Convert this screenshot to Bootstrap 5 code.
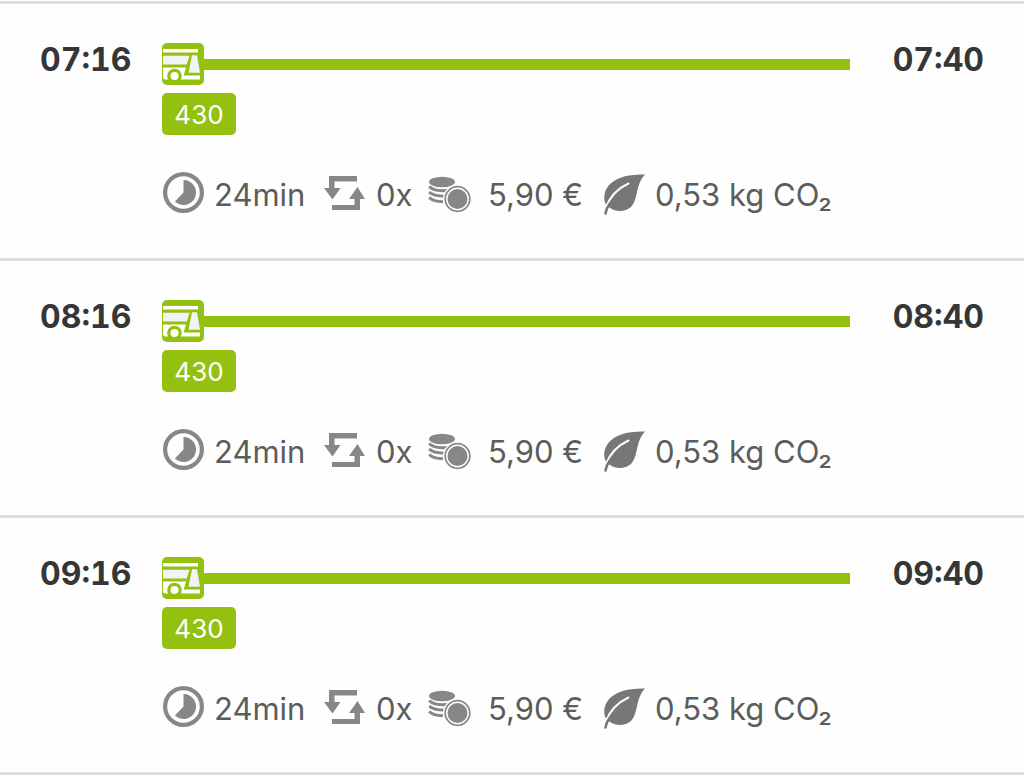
<!DOCTYPE html>
<html lang="de">
<head>
<meta charset="utf-8">
<meta name="viewport" content="width=device-width, initial-scale=1">
<title>Verbindungen</title>
<link href="https://cdn.jsdelivr.net/npm/bootstrap@5.3.0/dist/css/bootstrap.min.css" rel="stylesheet">
<style>
  body { font-family: Inter, "Liberation Sans", sans-serif; background: #fefefe; color: #5c5c5c; }
  .trips { border-top: 3px solid #dedede; margin-top: 1px; }
  .trip { border-bottom: 3px solid #dedede; padding: 39px 40px 41px; }
  .time { font-size: 32px; line-height: 34px; font-weight: 700; color: #363636; font-variant-numeric: tabular-nums; }
  .time-start { width: 122px; }
  .time-end { width: 134px; }
  .bus { width: 42px; height: 42px; }
  .leg { height: 11px; background: #94c010; }
  .line-tag { width: 74px; height: 42px; margin-top: 8px; border-radius: 5px; background: #94c010; color: #fff; font-size: 26px; line-height: 43px; }
  .facts { margin: 36px -60px 0 122px; font-size: 31px; line-height: 46px; }
  .fact span { padding-top: 1px; margin-bottom: -1px; }
  .fact svg { width: 44px; height: 44px; fill: #878787; }
  .fact-time { min-width: 162px; }
  .fact-change { min-width: 104px; }
  .fact-price { min-width: 175px; }
</style>
</head>
<body>
<svg class="d-none" aria-hidden="true">
  <symbol id="i-bus" viewBox="0 0 42 42">
    <rect width="42" height="42" rx="5" fill="#94c010"/>
    <path d="M1 6h35v3.500H1z" fill="#fff"/>
    <path d="M1 12.700h26.500l-2.700 8.800H1z" fill="#f1f3f4"/>
    <path d="M30 12.300h5l3 17.400H26.500z" fill="#f1f3f4"/>
    <path d="M1 24.500h23l-2.300 8H38v4H3a2 2 0 0 1-2-2z" fill="#fff"/>
    <circle cx="12.500" cy="33" r="7.300" fill="#94c010"/>
    <circle cx="12.500" cy="33" r="4" fill="#fff"/>
  </symbol>
  <symbol id="i-clock" viewBox="0 0 44 44">
    <circle cx="21.500" cy="21.500" r="18.400" fill="none" stroke="#878787" stroke-width="4.200"/>
    <path d="M21.500 9a12.500 12.500 0 1 1-8.600 21.500l8.600-9z"/>
  </symbol>
  <symbol id="i-change" viewBox="0 0 44 44">
    <path d="M5 5h28v5.500H10.500V17H16.500L8.500 28.500 0 17h5z"/>
    <path d="M36 39H8v-5h22.500v-6H25l8.500-12L41 28h-5z"/>
  </symbol>
  <symbol id="i-coins" viewBox="0 0 44 44">
    <ellipse cx="14" cy="11" rx="13" ry="5.200"/>
    <g fill="none" stroke="#878787" stroke-width="3">
      <path d="M1.200 15.500Q5 19.500 14 19.800q6 0 9-1.500"/>
      <path d="M1.200 21Q5 25 17 25.200"/>
      <path d="M1.200 26.500Q5 30.500 15 30.700"/>
    </g>
    <circle cx="29.500" cy="28" r="14.500" fill="#fefefe"/>
    <circle cx="29.500" cy="28" r="12.300" fill="none" stroke="#878787" stroke-width="1.700"/>
    <circle cx="29.500" cy="28" r="10"/>
  </symbol>
  <symbol id="i-leaf" viewBox="0 0 44 44">
    <path d="M42 3.500C32 3.500 20 4 11 10 2 16 0 24 2 32L7 37C13 41 22 41 28 36 36 27 32 14 42 3.500z" fill="#777"/>
    <path d="M25.500 12.500Q9 20 2.500 37" fill="none" stroke="#fefefe" stroke-width="2" stroke-linecap="round"/>
    <path d="M6.500 33Q3.500 37 2.500 42.500" fill="none" stroke="#777" stroke-width="2.600" stroke-linecap="round"/>
  </symbol>
</svg>

<main class="trips">
  <article class="trip">
    <div class="d-flex">
      <time class="time time-start flex-shrink-0">07:16</time>
      <div class="flex-grow-1">
        <div class="d-flex align-items-center"><svg class="bus flex-shrink-0" role="img" aria-label="Bus"><use href="#i-bus"/></svg><div class="leg flex-grow-1"></div></div>
        <div class="line-tag text-center">430</div>
      </div>
      <time class="time time-end flex-shrink-0 text-end">07:40</time>
    </div>
    <div class="facts d-flex flex-wrap">
      <div class="fact fact-time d-flex gap-2"><svg aria-hidden="true"><use href="#i-clock"/></svg><span>24min</span></div>
      <div class="fact fact-change d-flex gap-2"><svg aria-hidden="true"><use href="#i-change"/></svg><span>0x</span></div>
      <div class="fact fact-price d-flex gap-3"><svg aria-hidden="true"><use href="#i-coins"/></svg><span>5,90 €</span></div>
      <div class="fact d-flex gap-2"><svg aria-hidden="true"><use href="#i-leaf"/></svg><span>0,53 kg CO₂</span></div>
    </div>
  </article>
  <article class="trip">
    <div class="d-flex">
      <time class="time time-start flex-shrink-0">08:16</time>
      <div class="flex-grow-1">
        <div class="d-flex align-items-center"><svg class="bus flex-shrink-0" role="img" aria-label="Bus"><use href="#i-bus"/></svg><div class="leg flex-grow-1"></div></div>
        <div class="line-tag text-center">430</div>
      </div>
      <time class="time time-end flex-shrink-0 text-end">08:40</time>
    </div>
    <div class="facts d-flex flex-wrap">
      <div class="fact fact-time d-flex gap-2"><svg aria-hidden="true"><use href="#i-clock"/></svg><span>24min</span></div>
      <div class="fact fact-change d-flex gap-2"><svg aria-hidden="true"><use href="#i-change"/></svg><span>0x</span></div>
      <div class="fact fact-price d-flex gap-3"><svg aria-hidden="true"><use href="#i-coins"/></svg><span>5,90 €</span></div>
      <div class="fact d-flex gap-2"><svg aria-hidden="true"><use href="#i-leaf"/></svg><span>0,53 kg CO₂</span></div>
    </div>
  </article>
  <article class="trip">
    <div class="d-flex">
      <time class="time time-start flex-shrink-0">09:16</time>
      <div class="flex-grow-1">
        <div class="d-flex align-items-center"><svg class="bus flex-shrink-0" role="img" aria-label="Bus"><use href="#i-bus"/></svg><div class="leg flex-grow-1"></div></div>
        <div class="line-tag text-center">430</div>
      </div>
      <time class="time time-end flex-shrink-0 text-end">09:40</time>
    </div>
    <div class="facts d-flex flex-wrap">
      <div class="fact fact-time d-flex gap-2"><svg aria-hidden="true"><use href="#i-clock"/></svg><span>24min</span></div>
      <div class="fact fact-change d-flex gap-2"><svg aria-hidden="true"><use href="#i-change"/></svg><span>0x</span></div>
      <div class="fact fact-price d-flex gap-3"><svg aria-hidden="true"><use href="#i-coins"/></svg><span>5,90 €</span></div>
      <div class="fact d-flex gap-2"><svg aria-hidden="true"><use href="#i-leaf"/></svg><span>0,53 kg CO₂</span></div>
    </div>
  </article>
</main>
<script src="https://cdn.jsdelivr.net/npm/bootstrap@5.3.0/dist/js/bootstrap.bundle.min.js"></script>
</body>
</html>
